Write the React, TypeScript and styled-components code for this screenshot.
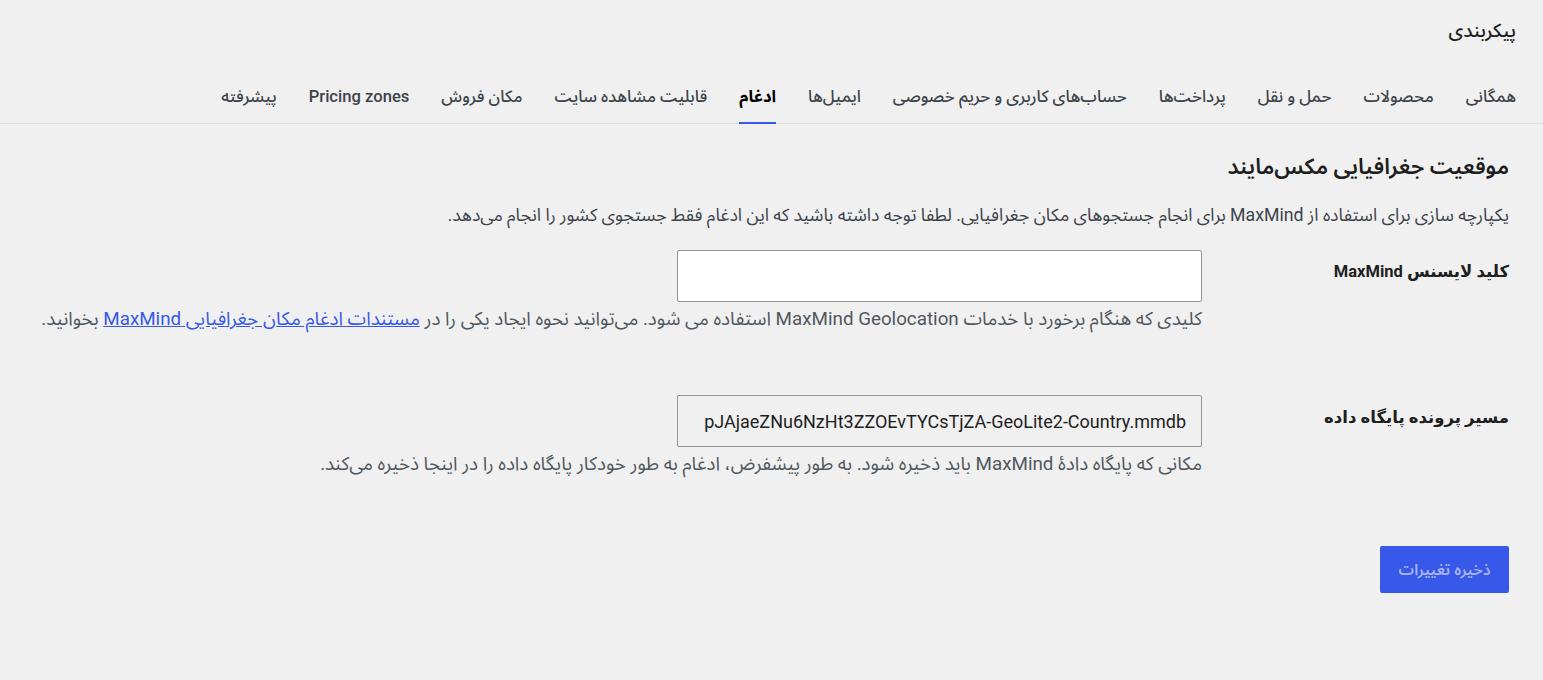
import styled, { createGlobalStyle } from 'styled-components'

const GlobalStyle = createGlobalStyle`
  body {
    margin: 0;
    background: #f0f0f0;
    direction: rtl;
    font-family: Roboto, "Noto Sans Arabic", "DejaVu Sans", sans-serif;
    color: #1e1e1e;
  }
`

const Styled = {
  Root: styled.div`
    min-height: 680px;
  `,
  Header: styled.div`
    padding: 9px 27px 0;
    height: 44px;
    display: flex;
    align-items: center;
  `,
  Title: styled.h1`
    margin: 0;
    font-size: 19px;
    line-height: 28px;
    font-weight: 500;
    color: #1e1e1e;
  `,
  Tabs: styled.nav`
    display: flex;
    gap: 32px;
    padding: 0 27px;
    margin-top: 22px;
    border-bottom: 1px solid #dcdcde;
  `,
  Tab: styled.a<{ $active?: boolean }>`
    font-size: 16.6px;
    line-height: 24px;
    font-weight: ${({ $active }) => ($active ? 700 : 500)};
    color: ${({ $active }) => ($active ? '#000' : '#3c434a')};
    padding: 10px 0 13px;
    border-bottom: 2px solid ${({ $active }) => ($active ? '#3858e9' : 'transparent')};
    margin-bottom: -1px;
    text-decoration: none;
    white-space: nowrap;
    cursor: pointer;
  `,
  Content: styled.div`
    padding: 27px 34px 0;
  `,
  Heading: styled.h2`
    margin: 0;
    font-size: 22px;
    line-height: 32px;
    font-weight: 600;
    color: #1e1e1e;
  `,
  Intro: styled.p`
    margin: 20px 0 0;
    font-size: 17.7px;
    line-height: 24px;
    color: #3c434a;
  `,
  Field: styled.div<{ $gap: number }>`
    display: grid;
    grid-template-columns: 307px 1fr;
    margin-top: ${({ $gap }) => $gap}px;
  `,
  Label: styled.label<{ $top: number }>`
    font-family: Roboto, "DejaVu Sans", sans-serif;
    font-size: 16.5px;
    line-height: 24px;
    font-weight: 700;
    color: #1e1e1e;
    padding-top: ${({ $top }) => $top}px;
  `,
  Control: styled.div`
    display: flex;
    flex-direction: column;
    align-items: flex-start;
  `,
  Input: styled.input<{ $readonly?: boolean }>`
    box-sizing: border-box;
    width: 525px;
    height: 52px;
    border: 1px solid #949494;
    border-radius: 2px;
    background: ${({ $readonly }) => ($readonly ? '#f0f0f0' : '#fff')};
    padding: 0 15px;
    font-family: Roboto, sans-serif;
    font-size: 18px;
    color: #1e1e1e;
    direction: ltr;
    text-align: ${({ $readonly }) => ($readonly ? 'right' : 'left')};
    outline: none;
  `,
  Help: styled.p`
    margin: 5px 0 0;
    font-size: 18.8px;
    line-height: 24px;
    color: #50575e;
    white-space: nowrap;
  `,
  Link: styled.a`
    color: #3858e9;
    text-decoration: underline;
  `,
  Footer: styled.div`
    margin-top: 70px;
    display: flex;
  `,
  SaveButton: styled.button`
    width: 129px;
    height: 47px;
    border: none;
    border-radius: 2px;
    background: #3858e9;
    color: #a6b4f4;
    font-family: inherit;
    font-size: 15.5px;
    font-weight: 600;
    cursor: default;
  `,
}

const tabs = [
  'همگانی',
  'محصولات',
  'حمل و نقل',
  'پرداخت‌ها',
  'حساب‌های کاربری و حریم خصوصی',
  'ایمیل‌ها',
  'ادغام',
  'قابلیت مشاهده سایت',
  'مکان فروش',
  'Pricing zones',
  'پیشرفته',
]

const App = () => {
  return (
    <Styled.Root>
      <GlobalStyle />
      <Styled.Header>
        <Styled.Title>پیکربندی</Styled.Title>
      </Styled.Header>
      <Styled.Tabs>
        {tabs.map((t) => (
          <Styled.Tab key={t} $active={t === 'ادغام'}>
            {t}
          </Styled.Tab>
        ))}
      </Styled.Tabs>
      <Styled.Content>
        <Styled.Heading>موقعیت جغرافیایی مکس‌مایند</Styled.Heading>
        <Styled.Intro>
          یکپارچه سازی برای استفاده از MaxMind برای انجام جستجوهای مکان جغرافیایی. لطفا توجه داشته باشید که این ادغام فقط جستجوی کشور را انجام می‌دهد.
        </Styled.Intro>

        <Styled.Field $gap={23}>
          <Styled.Label $top={10}>کلید لایسنس MaxMind</Styled.Label>
          <Styled.Control>
            <Styled.Input type="password" />
            <Styled.Help>
              کلیدی که هنگام برخورد با خدمات MaxMind Geolocation استفاده می شود. می‌توانید نحوه ایجاد یکی را در{' '}
              <Styled.Link href="#">مستندات ادغام مکان جغرافیایی MaxMind</Styled.Link> بخوانید.
            </Styled.Help>
          </Styled.Control>
        </Styled.Field>

        <Styled.Field $gap={64}>
          <Styled.Label $top={11}>مسیر پرونده پایگاه داده</Styled.Label>
          <Styled.Control>
            <Styled.Input $readonly readOnly value="pJAjaeZNu6NzHt3ZZOEvTYCsTjZA-GeoLite2-Country.mmdb" />
            <Styled.Help>
              مکانی که پایگاه دادهٔ MaxMind باید ذخیره شود. به طور پیشفرض، ادغام به طور خودکار پایگاه داده را در اینجا ذخیره می‌کند.
            </Styled.Help>
          </Styled.Control>
        </Styled.Field>

        <Styled.Footer>
          <Styled.SaveButton>ذخیره تغییرات</Styled.SaveButton>
        </Styled.Footer>
      </Styled.Content>
    </Styled.Root>
  )
}

export default App
